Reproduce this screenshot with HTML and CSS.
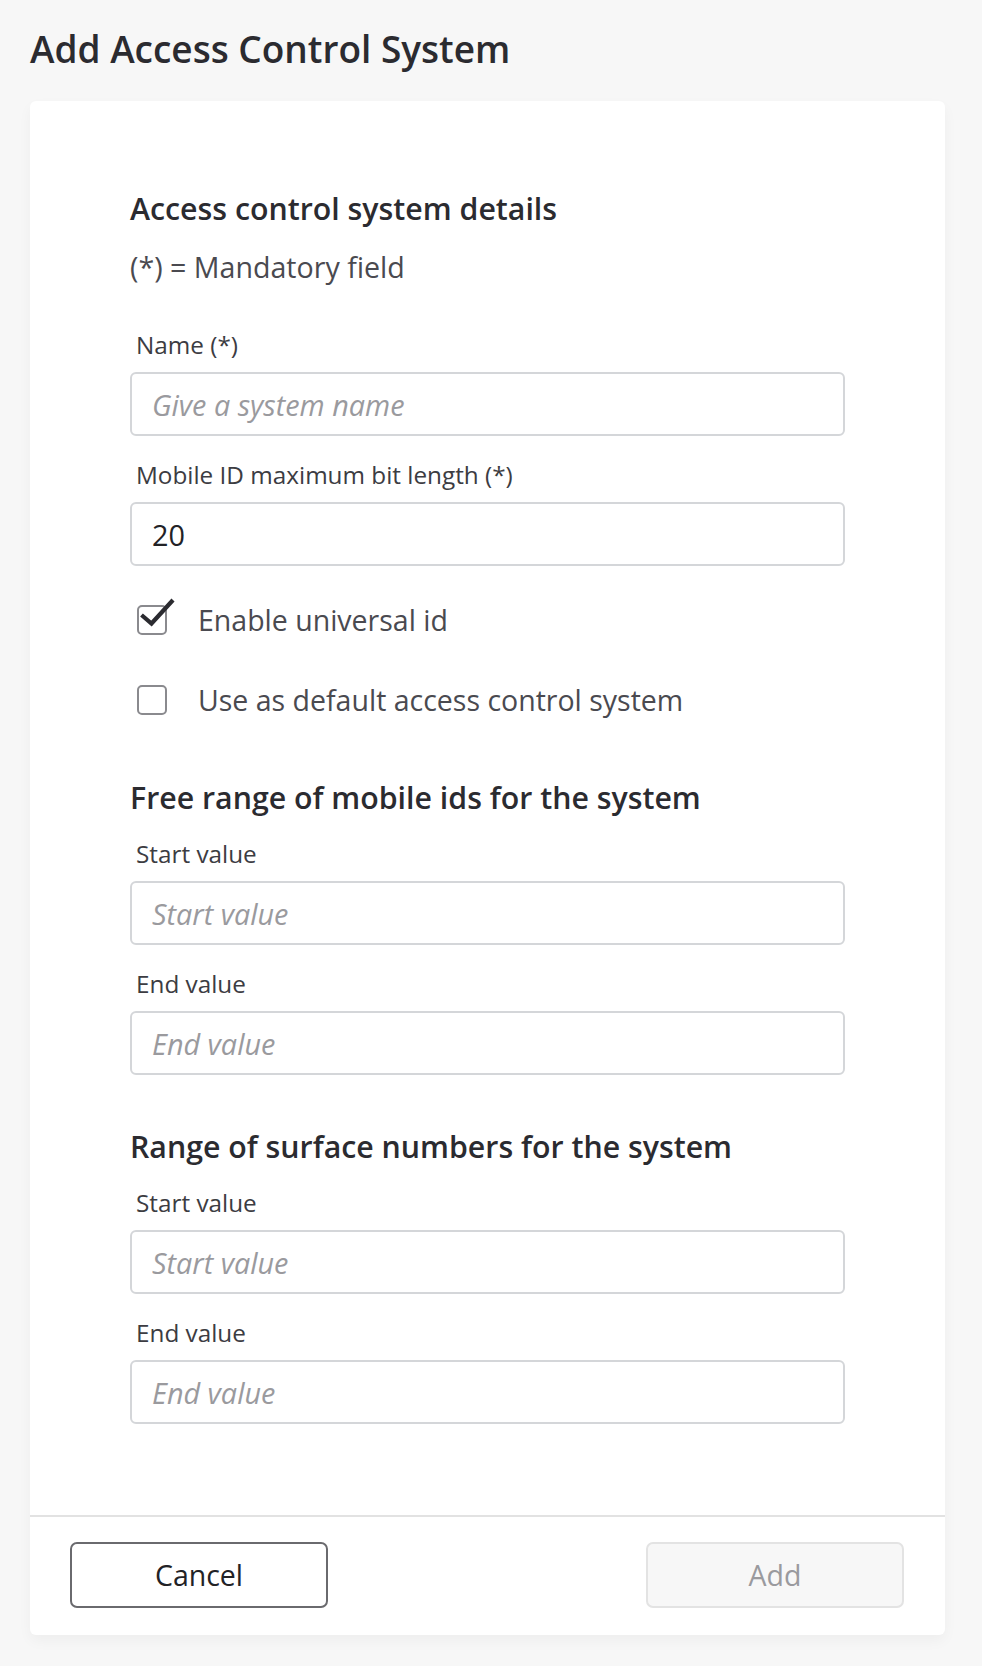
FILE: index.html
```html
<!DOCTYPE html>
<html lang="en">
<head>
<meta charset="utf-8">
<title>Add Access Control System</title>
<link rel="stylesheet" href="styles.css">
</head>
<body>
<h1 class="page-title">Add Access Control System</h1>
<div class="card">
  <div class="card-body">
    <h2 class="section-title">Access control system details</h2>
    <p class="mandatory">(*) = Mandatory field</p>

    <div class="field field-first">
      <label class="field-label">Name (*)</label>
      <input class="text-input" type="text" placeholder="Give a system name">
    </div>
    <div class="field">
      <label class="field-label">Mobile ID maximum bit length (*)</label>
      <input class="text-input" type="text" value="20">
    </div>

    <div class="check-row check-first">
      <span class="check-box">
        <svg class="check-mark" viewBox="0 0 30 30" width="30" height="30" aria-hidden="true"><path d="M4.5 10 L14.5 18.5 L36 -5" fill="none" stroke="#2b2b30" stroke-width="4.2" stroke-linecap="butt" stroke-linejoin="miter"/></svg>
      </span>
      <span class="check-label">Enable universal id</span>
    </div>
    <div class="check-row">
      <span class="check-box"></span>
      <span class="check-label">Use as default access control system</span>
    </div>

    <h2 class="section-title section-gap">Free range of mobile ids for the system</h2>
    <div class="field field-after-title">
      <label class="field-label">Start value</label>
      <input class="text-input" type="text" placeholder="Start value">
    </div>
    <div class="field">
      <label class="field-label">End value</label>
      <input class="text-input" type="text" placeholder="End value">
    </div>

    <h2 class="section-title section-gap2">Range of surface numbers for the system</h2>
    <div class="field field-after-title">
      <label class="field-label">Start value</label>
      <input class="text-input" type="text" placeholder="Start value">
    </div>
    <div class="field">
      <label class="field-label">End value</label>
      <input class="text-input" type="text" placeholder="End value">
    </div>
  </div>
  <div class="card-footer">
    <button class="btn btn-cancel" type="button">Cancel</button>
    <button class="btn btn-add" type="button" disabled>Add</button>
  </div>
</div>
</body>
</html>
```

FILE: styles.css
```css
* { box-sizing: border-box; }

html, body {
  margin: 0;
  padding: 0;
}

body {
  background: #f7f7f7;
  font-family: "Open Sans", "Noto Sans", "Liberation Sans", sans-serif;
  color: #2b2b30;
  padding: 24px 37px 31px 30px;
}

.page-title {
  margin: 0;
  font-size: 37px;
  line-height: 50px;
  font-weight: 600;
  color: #2b2b30;
}

.card {
  margin-top: 27px;
  background: #ffffff;
  border-radius: 6px;
  box-shadow: 0 6px 14px rgba(0, 0, 0, 0.04);
}

.card-body {
  padding: 88px 100px 91px 100px;
  display: flex;
  flex-direction: column;
}

.section-title {
  margin: 0;
  font-size: 30.3px;
  line-height: 40px;
  font-weight: 600;
  color: #2b2b30;
}

.mandatory {
  margin: 19px 0 0 0;
  font-size: 28.6px;
  line-height: 38px;
  color: #4a4a50;
}

.field {
  display: flex;
  flex-direction: column;
  margin-top: 23px;
}

.field-first { margin-top: 43px; }
.field-after-title { margin-top: 20px; }

.field-label {
  font-size: 24.3px;
  line-height: 32px;
  color: #3c3c42;
  padding-left: 6px;
  margin-bottom: 11px;
}

.text-input {
  width: 100%;
  height: 64px;
  border: 2px solid #d4d6d9;
  border-radius: 6px;
  padding: 0 20px;
  font-family: "Open Sans", "Noto Sans", "Liberation Sans", sans-serif;
  font-size: 28.8px;
  color: #222226;
  background: #ffffff;
  outline: none;
}

.text-input::placeholder {
  color: #9a9a9e;
  font-style: italic;
}

.check-row {
  display: flex;
  align-items: center;
  height: 40px;
  margin-top: 40px;
  padding-left: 7px;
}

.check-first { margin-top: 34px; }

.check-box {
  position: relative;
  width: 30px;
  height: 30px;
  border: 2px solid #8a8a8e;
  border-radius: 5px;
  flex: none;
}

.check-mark {
  position: absolute;
  left: -2px;
  top: -2px;
  overflow: visible;
}

.check-label {
  margin-left: 31px;
  font-size: 28.5px;
  line-height: 40px;
  color: #4a4a50;
}

.section-gap { margin-top: 58px; }
.section-gap2 { margin-top: 52px; }

.card-footer {
  border-top: 2px solid #e2e2e2;
  padding: 25px 41px 27px 40px;
  display: flex;
  justify-content: space-between;
}

.btn {
  width: 258px;
  height: 66px;
  border-radius: 7px;
  font-family: "Open Sans", "Noto Sans", "Liberation Sans", sans-serif;
  font-size: 28.5px;
}

.btn-cancel {
  background: #ffffff;
  border: 2px solid #6a6a6e;
  color: #222226;
}

.btn-add {
  background: #f7f7f7;
  border: 2px solid #e3e3e3;
  color: #9a9a9e;
}
```
